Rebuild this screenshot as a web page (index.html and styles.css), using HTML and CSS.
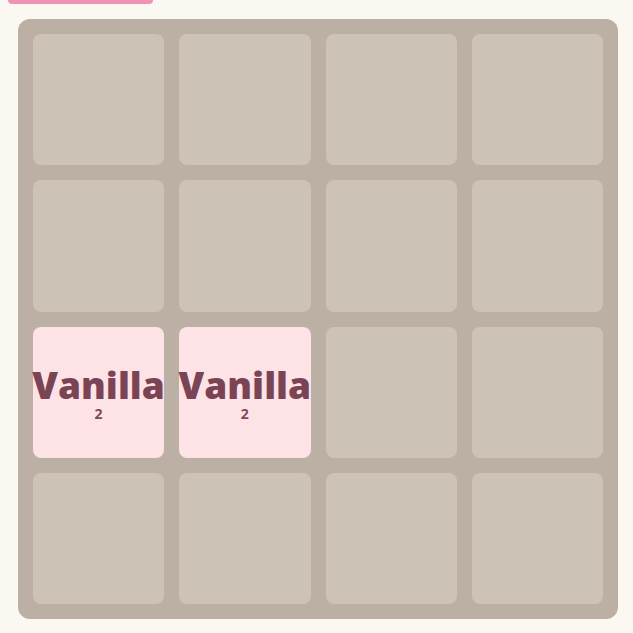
FILE: index.html
```html
<!DOCTYPE html>
<html>
<head>
<meta charset="utf-8">
<link rel="stylesheet" href="styles.css">
</head>
<body>
<div class="page">
  <div class="top-button"></div>
  <div class="board">
    <div class="cell"></div><div class="cell"></div><div class="cell"></div><div class="cell"></div>
    <div class="cell"></div><div class="cell"></div><div class="cell"></div><div class="cell"></div>
    <div class="cell tile"><span class="flavor">Vanilla</span><span class="value">2</span></div>
    <div class="cell tile"><span class="flavor">Vanilla</span><span class="value">2</span></div>
    <div class="cell"></div><div class="cell"></div>
    <div class="cell"></div><div class="cell"></div><div class="cell"></div><div class="cell"></div>
  </div>
</div>
</body>
</html>
```
FILE: styles.css
```css
html, body {
  margin: 0;
  padding: 0;
  background: #fbf8f1;
  font-family: "Open Sans", "DejaVu Sans", sans-serif;
}

.page {
  display: flex;
  flex-direction: column;
  padding: 0 0 0 8px;
  gap: 15px;
}

.top-button {
  width: 145px;
  height: 4px;
  background: #ef93b5;
  border-radius: 0 0 6px 6px;
}

.board {
  margin-left: 10px;
  width: 600px;
  height: 600px;
  box-sizing: border-box;
  padding: 15px;
  background: #bcafa3;
  border-radius: 12px;
  display: grid;
  grid-template-columns: repeat(4, minmax(0, 1fr));
  grid-template-rows: repeat(4, minmax(0, 1fr));
  gap: 15px;
}

.cell {
  background: #cdc2b6;
  border-radius: 8px;
}

.tile {
  background: #fde2e6;
  display: flex;
  flex-direction: column;
  align-items: center;
  justify-content: center;
  color: #7a4455;
  overflow: visible;
  white-space: nowrap;
}

.flavor {
  font-size: 37px;
  font-weight: 800;
  line-height: 34px;
  margin-top: 6px;
}

.value {
  font-size: 14px;
  font-weight: 700;
  line-height: 16px;
  margin-top: 4px;
  color: #7d4a5b;
}
```
